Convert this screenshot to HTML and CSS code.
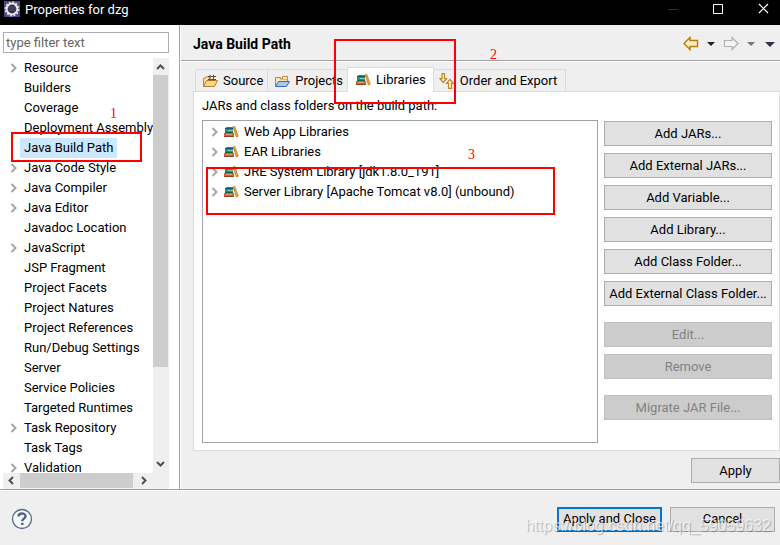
FILE: index.html
```html
<!DOCTYPE html>
<html lang="en">
<head>
<meta charset="utf-8">
<title>Properties for dzg</title>
<link rel="stylesheet" href="styles.css">
</head>
<body>
<svg class="defs" aria-hidden="true">
  <symbol id="chev" viewBox="0 0 8 10"><path d="M1.500 1 5.500 5 1.500 9" fill="none" stroke="#a6a6a6" stroke-width="2"/></symbol>
  <symbol id="books" viewBox="0 0 16 16">
    <path d="M3 3h7v2H3z" fill="#1685b5"/><path d="M2 4h8v1H2z" fill="#0b5f86"/>
    <path d="M2 5h8v4H2z" fill="#2f8f6b"/><path d="M5 6h5v1H5z" fill="#8fcdae"/><path d="M2 8h8v1H2z" fill="#13624a"/>
    <path d="M1 9h10v4H1z" fill="#c5663c"/><path d="M3 10h6v1H3z" fill="#e09a74"/><path d="M1 12h10v1H1z" fill="#94401d"/>
    <path d="M10 3 11.800 2.200l3.500 10-2 .8z" fill="#e8a33a" stroke="#c27a1c" stroke-width=".7"/>
  </symbol>
</svg>
<div class="window">
  <header class="titlebar">
    <svg class="app" viewBox="0 0 16 16"><rect width="16" height="16" fill="#54448a"/><circle cx="8" cy="8" r="6.700" fill="none" stroke="#ddd" stroke-width="1.600" stroke-dasharray="2 1.500"/><circle cx="8" cy="8" r="5.300" fill="#37324f" stroke="#eee" stroke-width="1.800"/><path d="M4.500 6.500h7M4 8h8M4.500 9.500h7" stroke="#555368" stroke-width=".6"/></svg>
    <h1>Properties for dzg</h1>
    <svg class="winctl" viewBox="0 0 108 18"><path d="M3 9.500h10" stroke="#333"/><path d="M48.500 4.500h9v9h-9z" fill="none" stroke="#fff"/><path d="m94 4 9 9m0-9-9 9" stroke="#fff" stroke-width="1.200"/></svg>
  </header>
  <main class="body">
    <aside class="side">
      <input class="filter" type="text" placeholder="type filter text" aria-label="Filter">
      <div class="treebox">
        <ul class="tree">
          <li><svg class="chev"><use href="#chev"/></svg><span>Resource</span></li>
          <li><span>Builders</span></li>
          <li><span>Coverage</span></li>
          <li><span>Deployment Assembly</span></li>
          <li><span class="sel">Java Build Path</span></li>
          <li><svg class="chev"><use href="#chev"/></svg><span>Java Code Style</span></li>
          <li><svg class="chev"><use href="#chev"/></svg><span>Java Compiler</span></li>
          <li><svg class="chev"><use href="#chev"/></svg><span>Java Editor</span></li>
          <li><span>Javadoc Location</span></li>
          <li><svg class="chev"><use href="#chev"/></svg><span>JavaScript</span></li>
          <li><span>JSP Fragment</span></li>
          <li><span>Project Facets</span></li>
          <li><span>Project Natures</span></li>
          <li><span>Project References</span></li>
          <li><span>Run/Debug Settings</span></li>
          <li><span>Server</span></li>
          <li><span>Service Policies</span></li>
          <li><span>Targeted Runtimes</span></li>
          <li><svg class="chev"><use href="#chev"/></svg><span>Task Repository</span></li>
          <li><span>Task Tags</span></li>
          <li><svg class="chev"><use href="#chev"/></svg><span>Validation</span></li>
        </ul>
        <div class="vbar">
          <svg viewBox="0 0 15 17"><path d="m4 11 3.500-3.500L11 11" fill="none" stroke="#505050" stroke-width="2"/></svg>
          <div class="thumb"></div>
          <svg viewBox="0 0 15 17"><path d="m4 6 3.500 3.500L11 6" fill="none" stroke="#505050" stroke-width="2"/></svg>
        </div>
        <div class="hbar">
          <svg viewBox="0 0 17 15"><path d="M10 4 6.500 7.500 10 11" fill="none" stroke="#505050" stroke-width="2"/></svg>
          <div class="thumb"></div>
          <svg viewBox="0 0 17 15"><path d="m7 4 3.500 3.500L7 11" fill="none" stroke="#505050" stroke-width="2"/></svg>
        </div>
      </div>
    </aside>
    <section class="page">
      <div class="pagehead">
        <h2>Java Build Path</h2>
        <svg class="nav" viewBox="0 0 96 16">
          <path d="M2 7.500 8 1.500v3h7.500v6H8v3z" fill="#fdf0b8" stroke="#b67a14" stroke-width="1.400"/>
          <path d="M25 6h8l-4 4z" fill="#222"/>
          <path d="M56 7.500 50 1.500v3h-7.500v6H50v3z" fill="#f4f4f4" stroke="#b0b0b0" stroke-width="1.200"/>
          <path d="M65 6h8l-4 4z" fill="#777"/>
          <path d="M83 6h10l-5 5z" fill="#3b2a55"/>
        </svg>
      </div>
      <div class="content">
        <div class="tabs" role="tablist">
          <button class="tab" role="tab"><svg viewBox="0 0 16 16"><path d="M1.500 13V5.500h1l1-1.500h3l1 1.500" fill="#fbe3a2" stroke="#b98132"/><path d="m1.500 13.500 3-6h11l-3 6z" fill="#f8d487" stroke="#b98132"/><path d="M6 3.500h8M6 6.500h8M8 2v6m3.500-6v6" stroke="#70482c"/></svg>Source</button>
          <button class="tab" role="tab"><svg viewBox="0 0 16 16"><path d="M1.500 13V4.500h5V6h7v3" fill="#fae6ae" stroke="#b98a3c"/><path d="M8.500 6V3.500h5V6" fill="#fae6ae" stroke="#b98a3c"/><path d="m1.500 13.500 3-5h11l-3 5z" fill="#a9c8f2" stroke="#426bb5"/></svg>Projects</button>
          <button class="tab active" role="tab" aria-selected="true"><svg><use href="#books"/></svg>Libraries</button>
          <button class="tab" role="tab"><svg viewBox="0 0 16 16"><path d="M3 .7h2.500v5h2L4.250 9.500 1 5.700h2z" fill="#fdf0b8" stroke="#b98a2c" stroke-width="1.200"/><path d="M9.500 15.300h3v-5h2L11 6.500l-3.500 3.800h2z" fill="#fdf0b8" stroke="#b98a2c" stroke-width="1.200"/></svg>Order and Export</button>
        </div>
        <div class="panel">
          <p>JARs and class folders on the build path:</p>
          <div class="cols">
            <ul class="libs">
              <li><svg class="chev"><use href="#chev"/></svg><svg class="book"><use href="#books"/></svg>Web App Libraries</li>
              <li><svg class="chev"><use href="#chev"/></svg><svg class="book"><use href="#books"/></svg>EAR Libraries</li>
              <li><svg class="chev"><use href="#chev"/></svg><svg class="book"><use href="#books"/></svg>JRE System Library [jdk1.8.0_191]</li>
              <li><svg class="chev"><use href="#chev"/></svg><svg class="book"><use href="#books"/></svg>Server Library [Apache Tomcat v8.0] (unbound)</li>
            </ul>
            <div class="actions">
              <button class="btn">Add JARs...</button>
              <button class="btn">Add External JARs...</button>
              <button class="btn">Add Variable...</button>
              <button class="btn">Add Library...</button>
              <button class="btn">Add Class Folder...</button>
              <button class="btn">Add External Class Folder...</button>
              <button class="btn group" disabled>Edit...</button>
              <button class="btn" disabled>Remove</button>
              <button class="btn group" disabled>Migrate JAR File...</button>
            </div>
          </div>
        </div>
      </div>
      <div class="applyrow"><button class="btn">Apply</button></div>
    </section>
  </main>
  <footer class="foot">
    <button class="help" aria-label="Help"><svg viewBox="0 0 22 22"><circle cx="11" cy="11" r="9.500" fill="#f7f8fa" stroke="#5a6a8a" stroke-width="1.300"/><path d="M7.500 8.500C7.500 4.500 14.500 4.500 14.500 8.200c0 2.300-3.300 2.500-3.300 5" fill="none" stroke="#526588" stroke-width="2.400"/><path d="M10 14.800h2.500V17H10z" fill="#526588"/></svg></button>
    <button class="btn primary">Apply and Close</button>
    <button class="btn">Cancel</button>
  </footer>
  <div class="mark m1"></div><div class="mark m2"></div><div class="mark m3"></div>
  <span class="num n1">1</span><span class="num n2">2</span><span class="num n3">3</span>
  <span class="watermark">https://blog.csdn.net/qq_59059632</span>
</div>
</body>
</html>
```
FILE: styles.css
```css
* { box-sizing: border-box; }
body { margin: 0; font: 13px/20px Roboto, "Noto Sans", sans-serif; color: #000; background: #efefef; }
h1, h2, p, ul { margin: 0; padding: 0; font-size: 13px; list-style: none; }
h2 { font-size: 14px; }
button, input { font: inherit; color: inherit; }
svg { flex: none; display: block; }
.defs { position: absolute; width: 0; height: 0; }
.window { position: relative; min-height: 100vh; overflow: hidden; display: flex; flex-direction: column; }

.titlebar { display: flex; align-items: flex-start; height: 25px; background: #000; color: #fff; padding-left: 4px; }
.titlebar h1 { flex: 1; font-weight: 400; margin-left: 5px; }
.app { width: 16px; height: 16px; margin-top: 1px; }
.winctl { width: 108px; height: 18px; margin-right: 7px; }

.body { flex: 1; display: flex; min-height: 0; border-bottom: 1px solid #a0a0a0; }
.side { width: 180px; flex: none; background: #fff; border-right: 1px solid #a0a0a0; padding: 7px 10px 0 3px; display: flex; flex-direction: column; }
.filter { width: 100%; height: 21px; border: 1px solid #abadb3; padding: 0 2px; background: #fff; }
.filter::placeholder { color: #666; opacity: 1; }
.treebox { flex: 1; margin-top: 5px; display: grid; grid-template: minmax(0, 1fr) 16px / minmax(0, 1fr) 16px; background: #efefef; }
.tree { height: 415px; overflow: hidden; background: #fff; }
.tree li { display: flex; align-items: center; height: 20px; padding-left: 7px; white-space: nowrap; }
.tree span { padding: 0 4px; }
.tree li > span:first-child { margin-left: 10px; }
.chev { width: 8px; height: 10px; margin-right: 2px; }
.sel { background: #cce8ff; }
.vbar { display: flex; flex-direction: column; }
.vbar svg { width: 15px; height: 17px; }
.vbar .thumb { width: 15px; height: 292px; margin-bottom: auto; }
.thumb { background: #cdcdcd; }
.hbar { grid-column: 1 / -1; display: flex; }
.hbar svg { width: 17px; height: 15px; }
.hbar .thumb { width: 113px; height: 15px; margin-right: 2px; }

.page { flex: 1; min-width: 0; border-left: 1px solid #fff; display: flex; flex-direction: column; }
.pagehead { height: 36px; display: flex; align-items: center; justify-content: space-between; padding: 2px 2px 0 12px; border-bottom: 1px solid #a0a0a0; box-shadow: 0 1px #fff; }
.nav { width: 96px; height: 16px; }
.content { flex: 1; display: flex; flex-direction: column; padding: 6px 0 0 12px; }
.tabs { display: flex; align-items: flex-end; height: 24px; padding-left: 2px; }
.tab { display: flex; align-items: center; height: 22px; padding: 0 4px 0 6px; gap: 5px; border: 1px solid #dcdcdc; border-width: 1px 0 0 1px; background: #efefef; white-space: nowrap; }
.tab:last-child { border-right-width: 1px; padding: 0 8px 0 5px; }
.tab svg { width: 16px; height: 16px; }
.tab.active { position: relative; height: 25px; margin-bottom: -1px; padding: 0 7px 1px; border-right-width: 1px; background: #fff; }
.tab.active + .tab { border-left: 0; }
.panel { flex: 1; background: #fff; border: 1px solid #dcdcdc; padding: 4px 7px 7px 8px; display: flex; flex-direction: column; }
.cols { flex: 1; display: flex; gap: 6px; margin-top: 4px; }
.libs { flex: 1; min-width: 0; border: 1px solid #a0a3a8; padding-top: 1px; }
.libs li { display: flex; align-items: center; height: 20px; padding-left: 8px; white-space: nowrap; }
.book { width: 16px; height: 16px; margin: 0 5px 0 2px; }
.actions { width: 168px; display: flex; flex-direction: column; gap: 7px; padding-top: 1px; }
.btn { height: 25px; padding: 0; border: 1px solid #adadad; background: #e1e1e1; white-space: nowrap; }
.btn:disabled { background: #ccc; border-color: #bfbfbf; color: #838383; }
.actions .group { margin-top: 9px; }
.applyrow { display: flex; justify-content: flex-end; padding: 7px 0 6px; }
.applyrow .btn { width: 89px; }

.foot { height: 55px; display: flex; align-items: center; gap: 8px; padding: 2px 5px 0 11px; border-top: 1px solid #fff; }
.help { border: 0; background: none; padding: 0; margin-right: auto; }
.help svg { width: 22px; height: 22px; }
.foot .btn { width: 105px; }
.foot .primary { border: 2px solid #0078d7; }

.mark { position: absolute; border: 2px solid #f00; }
.m1 { left: 11px; top: 132px; width: 131px; height: 30px; }
.m2 { left: 334px; top: 39px; width: 122px; height: 65px; }
.m3 { left: 206px; top: 167px; width: 349px; height: 48px; }
.num { position: absolute; color: #f00; font: 14px/16px "Liberation Serif", serif; }
.n1 { left: 110px; top: 106px; }
.n2 { left: 490px; top: 47px; }
.n3 { left: 468px; top: 147px; }
.watermark { position: absolute; right: 9px; bottom: 9px; font: 16px/20px "Liberation Sans", sans-serif; color: rgba(255,255,255,.65); text-shadow: 1px 1px 1px rgba(0,0,0,.25); pointer-events: none; }
```
